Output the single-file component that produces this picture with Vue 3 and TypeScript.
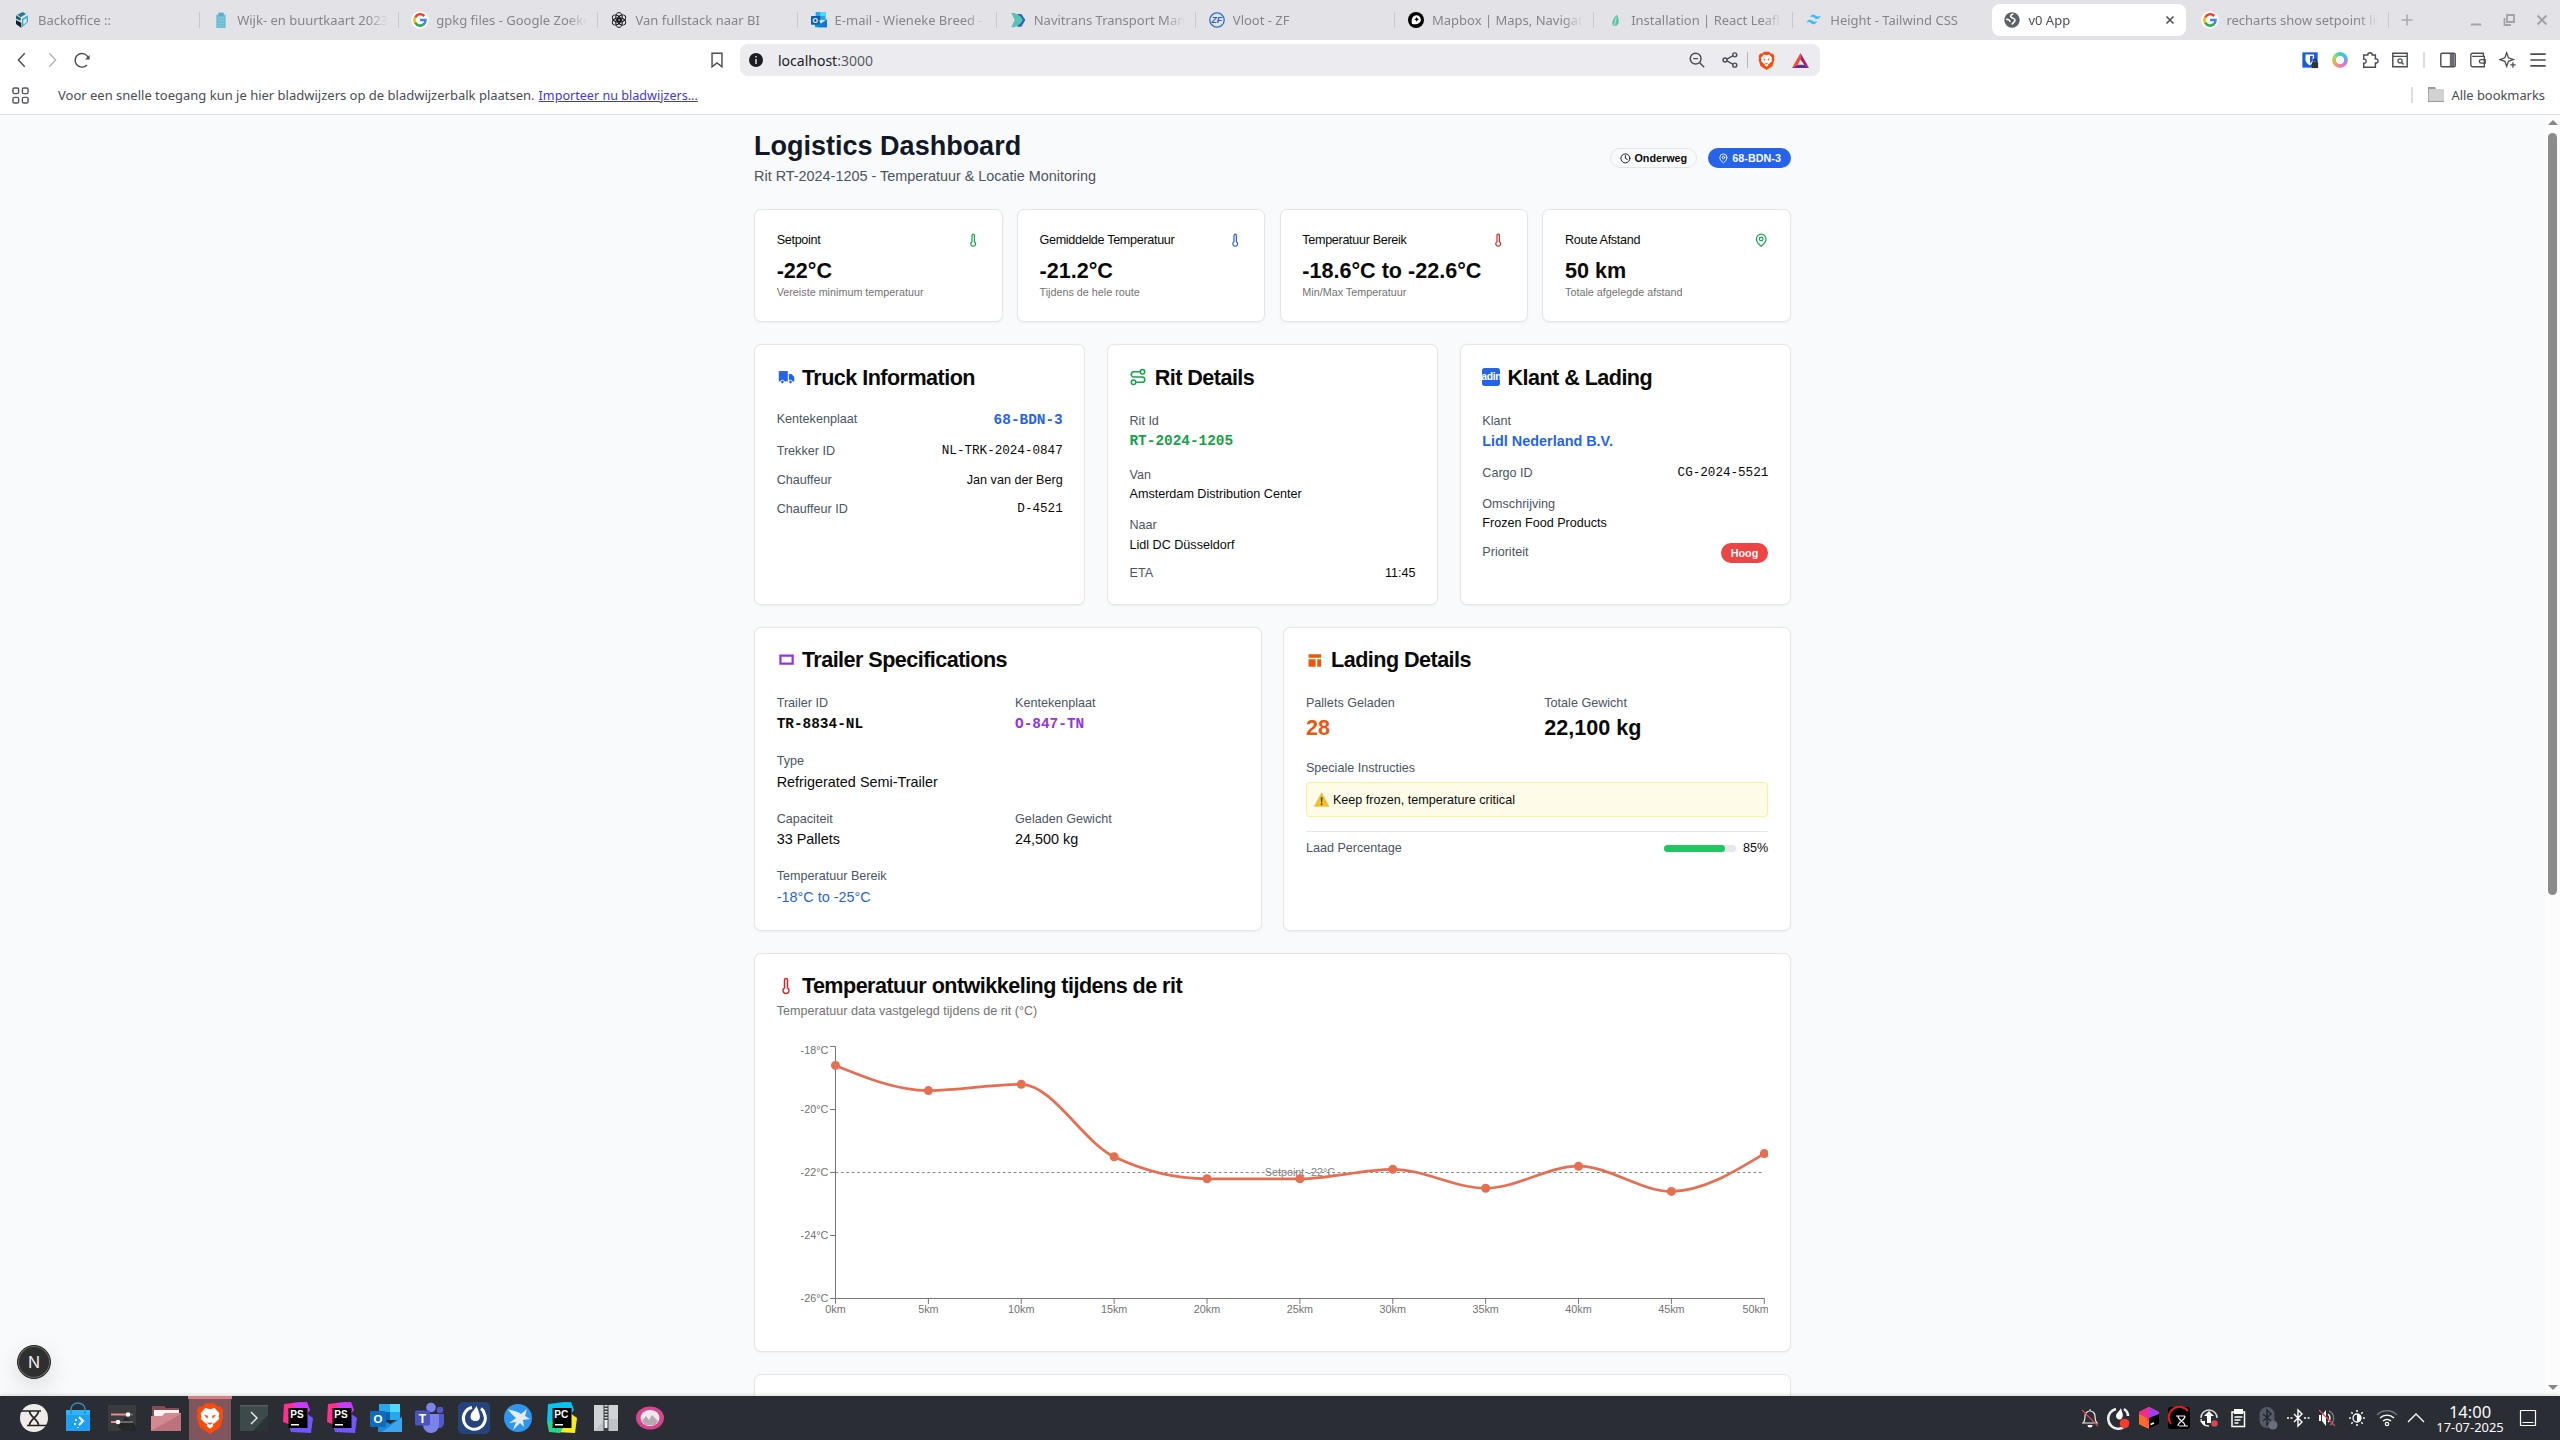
<script setup lang="ts">
interface Tab { title: string; icon: string; active?: boolean }

const tabs: Tab[] = [
  { title: 'Backoffice ::', icon: 'cube' },
  { title: 'Wijk- en buurtkaart 2023', icon: 'clip' },
  { title: 'gpkg files - Google Zoeken', icon: 'google' },
  { title: 'Van fullstack naar BI', icon: 'gpt' },
  { title: 'E-mail - Wieneke Breed - Outlook', icon: 'outlook' },
  { title: 'Navitrans Transport Management', icon: 'navi' },
  { title: 'Vloot - ZF', icon: 'zf' },
  { title: 'Mapbox | Maps, Navigation', icon: 'mapbox' },
  { title: 'Installation | React Leaflet', icon: 'leaf' },
  { title: 'Height - Tailwind CSS', icon: 'tailwind' },
  { title: 'v0 App', icon: 'globe', active: true },
  { title: 'recharts show setpoint line', icon: 'google' },
]

const lion = '<path d="M6 3.500 9 1h6l3 2.500 2-.3 2 3.300-.7 2L22 11l-2.400 8-7.600 5-7.600-5L2 11l.7-2.500L2 6.500l2-3.300z" fill="#fb4b0b"/><path d="M12 5.500l3.500-1 3.500 4-.6 2.500.6 1.500-3.500 3.500-1.500.4.500 1.600-2.500 2-2.500-2 .5-1.600L8.500 16 5 12.500 5.600 11 5 8.500l3.500-4z" fill="#fff"/><path d="M7.500 9.500l3 .8-.5 2.200zM16.500 9.500l-3 .8.5 2.200zM9.500 15.500h5L12 17z" fill="#fb4b0b"/>'
const ps = (label: string, a: string, b: string, c: string) =>
  `<path d="M2 2 20 0l5 3 1 10-12 12L1 20z" fill="${a}"/><path d="M10 1l15-1 3 8-6 8z" fill="${b}"/><path d="M24 11l7 5-2 15-20-1-2-6z" fill="${c}"/><path d="M6.500 6h19v20h-19z" fill="#000"/><text x="8.300" y="15.500" font-family="Liberation Sans, sans-serif" font-weight="700" font-size="10" fill="#fff">${label}</text><path d="M9 22h8v1.500H9z" fill="#fff"/>`

const icons: Record<string, string> = {
  cube: '<path d="M5 4l8-4 5 3-8 5z" fill="#1c7f8e"/><path d="M3 5l7 4v4l-7-3z" fill="#155e70"/><path d="M12 10l9-5v10l-9 8z" fill="#35b3cd"/><path d="M3 12l8 4v8l-8-6z" fill="#0b2733"/><path d="M14 12l5-3v6l-5 4z" fill="#e3e2e7"/>',
  clip: '<path d="M5 4h14v20H5z" fill="#6cbcd6"/><path d="M8 1h8v5H8z" fill="#59aecb"/><path d="M7 9h10M7 13h10M7 17h10M7 21h10" stroke="#8fd0e4"/>',
  google: '<circle cx="12" cy="12" r="13" fill="#fff"/><path d="M18.500 6A8.500 8.500 0 0 0 4.800 8" fill="none" stroke="#ea4335" stroke-width="3.800"/><path d="M4.800 7.800a8.500 8.500 0 0 0 0 8.400" fill="none" stroke="#fbbc05" stroke-width="3.800"/><path d="M4.800 16a8.500 8.500 0 0 0 12.800 2.500" fill="none" stroke="#34a853" stroke-width="3.800"/><path d="M17.300 18.800c2-1.700 3.100-4 3.100-6.800H12" fill="none" stroke="#4285f4" stroke-width="3.800"/>',
  gpt: '<g fill="none" stroke="#111" stroke-width="1.500"><ellipse cx="12" cy="7.500" rx="4.800" ry="6.500"/><ellipse cx="12" cy="7.500" rx="4.800" ry="6.500" transform="rotate(60 12 12)"/><ellipse cx="12" cy="7.500" rx="4.800" ry="6.500" transform="rotate(120 12 12)"/><ellipse cx="12" cy="7.500" rx="4.800" ry="6.500" transform="rotate(180 12 12)"/><ellipse cx="12" cy="7.500" rx="4.800" ry="6.500" transform="rotate(240 12 12)"/><ellipse cx="12" cy="7.500" rx="4.800" ry="6.500" transform="rotate(300 12 12)"/></g>',
  outlook: '<path d="M7 0h15v12H7z" fill="#28a8ea"/><path d="M14 0h8v6h-8z" fill="#50d9ff"/><path d="M7 6h7v6H7z" fill="#0364b8"/><path d="M6 11l9 6 9-6v12H6z" fill="#1490df"/><path d="M24 11L10 23h14z" fill="#0f78d4"/><rect y="6" width="13" height="13" rx="1" fill="#0a5fb0"/><text x="6.500" y="16.200" text-anchor="middle" font-family="Liberation Sans, sans-serif" font-weight="700" font-size="10.500" fill="#fff">O</text>',
  navi: '<path d="M11 3h6l6 9-6 10h-6z" fill="#2f62b5"/><path d="M2 1.500h4c7 2.500 12 6.500 13 10.500-1 4-6 8.500-13 11H2l5-11z" fill="#54c6b8"/>',
  zf: '<circle cx="12" cy="12" r="10.800" fill="none" stroke="#2f6fc5" stroke-width="2"/><text x="11.500" y="16.800" text-anchor="middle" font-family="Liberation Sans, sans-serif" font-style="italic" font-weight="700" font-size="13" fill="#1f62c0">ZF</text>',
  mapbox: '<circle cx="12" cy="12" r="12" fill="#000"/><path d="M6 18c-2-8 2-13 7-13a6.500 6.500 0 0 1 5.500 9.500C16 18 11 19 6 18z" fill="#fff"/><path d="M13 7.500l1.200 2.300 2.300 1.200-2.300 1.200L13 14.500l-1.200-2.300L9.500 11l2.300-1.200z" fill="#000"/>',
  leaf: '<path d="M15 4c4 7 4 16-3 17-6 0-6-9 3-17z" fill="#5cc5a5"/><path d="M14 8l-3 12" stroke="#d7efe8" stroke-width="1.200"/>',
  tailwind: '<path d="M6.500 8c1-4 3.500-4.500 5.500-4 3 .8 4 4.500 10 1.500-1.500 5-5 5.500-7.500 4.500C12 9 11 5.500 6.500 8zM1 16c1.500-4.500 4-5 6.500-4 2.500.8 4 4 9 1.500-1.500 5-4.500 5.500-7 4.500C7 17 6 13.500 1 16z" fill="#38bdf8"/>',
  globe: '<circle cx="12" cy="12" r="11.500" fill="#5f6168"/><path d="M14 3c-4 1-5 3.500-3 5s5.500 1.500 5.500 4-2.500 4.500-5 6.500M3 11c3.500 0 6 1 6 4" fill="none" stroke="#fff" stroke-width="2.300"/>',
  brave: lion,
  kali: '<circle cx="16" cy="16" r="14" fill="#efebe8"/><path d="M3 9h20M9 23.500h20M11.500 9c0 6 9 8 9 14.500M20.500 9c0 6-9 8-9 14.500" fill="none" stroke="#222" stroke-width="1.700"/>',
  bag: '<path d="M4 8h24v21H4z" fill="#1da1f5"/><path d="M4 8h24v5H4z" fill="#2fb4fb"/><path d="M9 12V7a7 6 0 0 1 14 0v5" fill="none" stroke="#2f8fc0" stroke-width="1.500"/><path d="M17 15l4 4-4 4" fill="none" stroke="#fff" stroke-width="2"/><path d="M13 17h2v2h-2zM12 21h2v2h-2zM15 25h2v1h-2z" fill="#d7f0ff"/>',
  settings: '<path d="M2 3h28v26H2z" fill="#393b3d"/><path d="M12 24l8-9 10 9v5H16z" fill="#242628"/><path d="M5 12.500h17" stroke="#e58a94" stroke-width="2"/><path d="M22 12.500h5M12 20h15" stroke="#66686b" stroke-width="2"/><path d="M5 20h7" stroke="#e58a94" stroke-width="2"/><circle cx="22" cy="12.500" r="2.300" fill="#fff"/><circle cx="12" cy="20" r="2.300" fill="#fff"/>',
  folder: '<path d="M2 4h12l2 2h13v8H2z" fill="#844d56"/><path d="M4 8h25v8H4z" fill="#fbf3f3"/><path d="M1 14h11l3-3h16v18H1z" fill="#d38991"/><path d="M1 29L31 12v17z" fill="#bd737c"/>',
  term: '<path d="M2 3h28v26H2z" fill="#3c4a4b"/><path d="M2 3h28v1.500H2z" fill="#526062"/><path d="M30 13L15 29h15z" fill="#2b3435"/><path d="M13 10l6 6-6 6" fill="none" stroke="#eee" stroke-width="1.400"/>',
  ps: ps('PS', '#ff318c', '#c83cff', '#7256ff'),
  pc: ps('PC', '#07c3f2', '#07c3f2', '#f9ec22') + '<path d="M1 20l5.500-1v7H17l-3 5L3 30z" fill="#21d789"/>',
  outlookBig: '<path d="M9 2h21v16H9z" fill="#28a8ea"/><path d="M20 2h10v8H20z" fill="#50d9ff"/><path d="M9 10h11v8H9z" fill="#0364b8"/><path d="M8 15l12 7 12-7v15H8z" fill="#1a88d8"/><path d="M32 15L12 30h20z" fill="#3aa6ee"/><rect y="9" width="16" height="16" rx="1.500" fill="#0f6cbd"/><text x="8" y="21" text-anchor="middle" font-family="Liberation Sans, sans-serif" font-weight="700" font-size="11.500" fill="#fff">O</text>',
  teams: '<circle cx="26" cy="8" r="3.300" fill="#5059c9"/><circle cx="17" cy="5.500" r="4.800" fill="#7b83eb"/><path d="M22 12h8v9a5 5 0 0 1-6 5z" fill="#5059c9"/><path d="M9 12h16v11a8 8 0 0 1-16 0z" fill="#7b83eb"/><rect x="1" y="8.500" width="15" height="15" rx="1.500" fill="#4b53bc"/><text x="8.500" y="20.500" text-anchor="middle" font-family="Liberation Sans, sans-serif" font-weight="700" font-size="12" fill="#fff">T</text>',
  mattermost: '<rect width="32" height="32" rx="5" fill="#25447b"/><path d="M14 5.500A11 11 0 1 0 26 11c-.5-2-1.500-3.500-3-4.500" fill="none" stroke="#fff" stroke-width="3"/><path d="M18.500 4c3 7 4 10 3 13s-9 3-9-2 4-7 6-11z" fill="#fff"/>',
  falcon: '<circle cx="16" cy="16" r="14" fill="#2e96ef"/><path d="M6 7c5 2 8 1.500 13 5l6-5-2 7 5 3-7 1 1 7-4-4-7 7 3-8-7 1 7-5c-3-3-6-5-8-9z" fill="#e6e9ee"/>',
  zip: '<path d="M4 3h24v26H4z" fill="#cfd3d6"/><path d="M4 29L16 17h12v12z" fill="#bfc4c8"/><path d="M13.500 3h5v26h-5z" fill="#3c3f42"/><path d="M16 3v16" stroke="#ddd" stroke-width="3" stroke-dasharray="1.500"/><path d="M14.500 18h3v8h-3z" fill="#f0f0f0"/>',
  pink: '<ellipse cx="16" cy="16" rx="14" ry="11.500" fill="#d6458d"/><ellipse cx="16" cy="16" rx="9.500" ry="8" fill="#f4e7ee"/><path d="M8 19l4-5 3 4 3-5 6 6-3 4H11z" fill="#b7a7b1"/>',
  bellOff: '<path d="M5 17c2-2 2-4 2-7a5 5 0 0 1 10 0c0 3 0 5 2 7z" fill="none" stroke="#eee" stroke-width="1.200"/><path d="M12 3V5" stroke="#eee"/><path d="M9.500 19h5a2.500 2.500 0 0 1-5 0z" fill="#fff"/><path d="M4 4l16 16" stroke="#da4453" stroke-width="1.300"/>',
  mmTray: '<path d="M9 3A10 10 0 1 0 21 15M17 3c3 2 4 4 4 7" fill="none" stroke="#eee" stroke-width="2.600"/><path d="M14 2c1 5 3 7 1 10s-6 1-6-2 4-5 5-8z" fill="#fff"/><circle cx="17.500" cy="17.500" r="4.800" fill="#f93c2b"/>',
  toolbox: '<path d="M12 1l10 5v12l-10 5L2 18V6z" fill="#ff5b3a"/><path d="M12 1l10 5-8 7-12 5V6z" fill="#ef2c8c"/><path d="M12 1l10 5v6l-10-1z" fill="#a33df5"/><path d="M2 8l8 4v10l-8-4z" fill="#ff6a2c"/><path d="M12 12l10-4v10l-10 5z" fill="#000"/><path d="M13.500 18.500l3.500-1.500" stroke="#fff" stroke-width="1.400"/>',
  kdeRed: '<rect x="1" y="1" width="22" height="22" rx="3" fill="#000"/><path d="M4 18A9.500 9.500 0 0 1 21 5" fill="none" stroke="#e02020" stroke-width="2"/><path d="M9 10h9M12 20h9M11 10c0 5 7 5 7 10M18 10c0 5-7 5-7 10" fill="none" stroke="#eee" stroke-width="1.200"/>',
  update: '<path d="M4 12a8 8 0 0 1 16 0M4 13c0 4 4 7.500 8 7" fill="none" stroke="#ddd" stroke-width="1.500"/><path d="M12 5l5 5h-3v7h-4v-7H7z" fill="#fff"/><path d="M3 15h5v5z" fill="#fff"/><circle cx="17.500" cy="17.500" r="3.200" fill="#da4453"/>',
  clipboard: '<path d="M6 6h12.500v14.500H6z" fill="none" stroke="#fff" stroke-width="1.500"/><path d="M8 3h9v5H8z" fill="#fff"/><path d="M8.500 11h8M8.500 14h6M8.500 17h4" stroke="#fff" stroke-width="1.300"/>',
  btOff: '<rect x="3.500" y="1" width="15" height="21" rx="7.500" fill="#555a68"/><path d="M7 8l8 7-4 4V4l4 4-8 7" fill="none" stroke="#24272d" stroke-width="1.500"/><circle cx="17" cy="19" r="4.500" fill="#6a6f7c"/>',
  bt: '<path d="M8 8l8 8-4 4V4l4 4-8 8" fill="none" stroke="#fff" stroke-width="1.400"/><path d="M1 12h2M4.500 12h2M18 12h2M21.500 12h2" stroke="#fff" stroke-width="1.500"/>',
  mute: '<path d="M4 9h2v6H4zM7 9l4-5v16l-4-5z" fill="#fff"/><path d="M13 8a5 5 0 0 1 0 8" fill="none" stroke="#fff" stroke-width="1.400"/><path d="M14 5a8 8 0 0 1 1 14" fill="none" stroke="#777" stroke-width="1.400"/><path d="M4 4l16 16" stroke="#da4453" stroke-width="1.300"/>',
  sun: '<circle cx="12" cy="12" r="4" fill="none" stroke="#fff" stroke-width="1.300"/><path d="M12 8a4 4 0 0 1 0 8z" fill="#fff"/><path d="M12 4v2M12 18v2M4 12h2M18 12h2M6.300 6.300l1.400 1.400M16.300 16.300l1.400 1.400M6.300 17.700l1.400-1.400M16.300 7.700l1.400-1.400" stroke="#eee" stroke-width="1.600"/>',
  wifi: '<path d="M2 9a14 14 0 0 1 20 0" fill="none" stroke="#71757b" stroke-width="1.400"/><path d="M5 12a10 10 0 0 1 14 0M8 15a6 6 0 0 1 8 0" fill="none" stroke="#fff" stroke-width="1.400"/><circle cx="12" cy="18" r="1.700" fill="none" stroke="#fff" stroke-width="1.200"/>',
  up: '<path d="M4 16l8-8 8 8" fill="none" stroke="#fff" stroke-width="1.300"/>',
}

const tasks = ['kali', 'bag', 'settings', 'folder', 'brave', 'term', 'ps', 'ps', 'outlookBig', 'teams', 'mattermost', 'falcon', 'pc', 'zip', 'pink']
const tray = ['bellOff', 'mmTray', 'toolbox', 'kdeRed', 'update', 'clipboard', 'btOff', 'bt', 'mute', 'sun', 'wifi', 'up']

const thermometer = '<path d="M14 4v10.540a4 4 0 1 1-4 0V4a2 2 0 0 1 4 0Z"/>'
const pin = '<path d="M20 10c0 4.993-5.539 10.193-7.399 11.799a1 1 0 0 1-1.202 0C9.539 20.193 4 14.993 4 10a8 8 0 0 1 16 0"/><circle cx="12" cy="10" r="3"/>'

const stats = [
  { label: 'Setpoint', value: '-22°C', note: 'Vereiste minimum temperatuur', icon: thermometer, tone: 'green' },
  { label: 'Gemiddelde Temperatuur', value: '-21.2°C', note: 'Tijdens de hele route', icon: thermometer, tone: 'blue' },
  { label: 'Temperatuur Bereik', value: '-18.6°C to -22.6°C', note: 'Min/Max Temperatuur', icon: thermometer, tone: 'red' },
  { label: 'Route Afstand', value: '50 km', note: 'Totale afgelegde afstand', icon: pin, tone: 'green' },
]

// Chart geometry
const temps = [-18.6, -19.4, -19.2, -21.5, -22.2, -22.2, -21.9, -22.5, -21.8, -22.6, -21.4]
const px = (i: number) => 65 + i * 103.2
const py = (t: number) => 5 + (-18 - t) * 35
const points = temps.map((t, i) => ({ x: px(i), y: py(t), km: `${i * 5}km` }))
const yTicks = [-18, -20, -22, -24, -26]

function monotonePath(p: { x: number; y: number }[]): string {
  const n = p.length
  const h = 103.2
  const s = p.slice(1).map((q, i) => (q.y - p[i].y) / h)
  const m: number[] = new Array(n).fill(0)
  for (let i = 1; i < n - 1; i++) {
    const mid = (s[i - 1] + s[i]) / 2
    m[i] = (Math.sign(s[i - 1]) + Math.sign(s[i])) * Math.min(Math.abs(s[i - 1]), Math.abs(s[i]), 0.5 * Math.abs(mid))
  }
  m[0] = (3 * s[0] - m[1]) / 2
  m[n - 1] = (3 * s[n - 2] - m[n - 2]) / 2
  let d = `M${p[0].x},${p[0].y}`
  for (let i = 0; i < n - 1; i++) {
    d += `C${p[i].x + h / 3},${p[i].y + (m[i] * h) / 3},${p[i + 1].x - h / 3},${p[i + 1].y - (m[i + 1] * h) / 3},${p[i + 1].x},${p[i + 1].y}`
  }
  return d
}
const curve = monotonePath(points)
const loadPercentage = 85
</script>

<template>
  <div class="screen">
    <header class="browser">
      <div class="tabstrip">
        <div v-for="(t, i) in tabs" :key="i" class="tab" :class="{ active: t.active, nosep: i === 9 }">
          <svg class="fav" viewBox="0 0 24 24" v-html="icons[t.icon]"></svg>
          <span class="tab-title">{{ t.title }}</span>
          <svg v-if="t.active" class="tab-x" viewBox="0 0 10 10"><path d="M1.500 1.500l7 7M8.500 1.500l-7 7" stroke="#55565c" stroke-width="1.700" /></svg>
        </div>
        <svg class="plus" viewBox="0 0 12 12"><path d="M6 0.500v11M0.500 6h11" stroke="#a9a9ae" stroke-width="1.500" /></svg>
        <div class="winbtns">
          <svg viewBox="0 0 12 12"><path d="M1 10.500h10" stroke="#a2a2a8" stroke-width="2" /></svg>
          <svg viewBox="0 0 12 12"><path d="M4 1h7v7H4zM1.500 4v7H8" fill="none" stroke="#a2a2a8" stroke-width="1.800" /></svg>
          <svg viewBox="0 0 12 12"><path d="M1.500 1.500l9 9M10.500 1.500l-9 9" stroke="#a2a2a8" stroke-width="2" /></svg>
        </div>
      </div>

      <div class="toolbar">
        <div class="nav">
          <svg viewBox="0 0 20 20"><path d="M13 2.500L6 10l7 7.500" stroke="#4b4c55" /></svg>
          <svg viewBox="0 0 20 20"><path d="M7 2.500l7 7.500-7 7.500" stroke="#b4b5ba" /></svg>
          <svg viewBox="0 0 20 20"><path d="M15.500 15.500A7.600 7.600 0 1 1 17 7.500" stroke="#4b4c55" /><path d="M18.500 4.500v5h-5z" fill="#4b4c55" /></svg>
        </div>
        <svg class="bookmark" viewBox="0 0 20 20"><path d="M4.500 2.500h11v15L10 13.200 4.500 17.500z" stroke="#4b4c55" /></svg>
        <div class="address">
          <svg class="info" viewBox="0 0 14 14"><circle cx="7" cy="7" r="7" fill="#1c1c22" /><path d="M7 6v5M7 3v1.500" stroke="#fff" stroke-width="1.300" /></svg>
          <span class="url">localhost<i>:3000</i></span>
          <div class="addr-tools">
            <svg viewBox="0 0 20 20"><circle cx="8.500" cy="8.500" r="6" stroke="#4b4c55" /><path d="M13 13l5 5M5.800 8.500h5.400" stroke="#4b4c55" /></svg>
            <svg viewBox="0 0 20 20"><path d="M13.500 5.200L6.500 9M6.500 11l7 3.800" stroke="#4b4c55" /><circle cx="4.500" cy="10" r="2.200" stroke="#4b4c55" /><circle cx="15.300" cy="4.300" r="2.200" stroke="#4b4c55" /><circle cx="15.300" cy="15.700" r="2.200" stroke="#4b4c55" /></svg>
            <span class="vsep"></span>
            <svg class="lion" viewBox="0 0 24 24" v-html="icons.brave"></svg>
            <svg class="bat" viewBox="0 0 20 18"><path d="M10 1L1 17l6-3.500 3-5.500z" fill="#ff4724" /><path d="M1 17h18l-5-3.500H7z" fill="#662d91" /><path d="M10 1l9 16-5-3.500L10 8z" fill="#9e1f63" /></svg>
          </div>
        </div>
        <div class="ext">
          <svg viewBox="0 0 20 20"><path d="M1.500 1.500h17v17h-17z" fill="#175ddc" /><path d="M5 4h9.500v6c0 3-4.700 6-4.700 6S5 13 5 10z" fill="#fff" /><path d="M10 5.500h3v5l-3 3z" fill="#175ddc" /><path d="M12 12.500h7V19h-7z" fill="#333" /><path d="M13.500 12.500V11a2 2 0 0 1 4 0v1.500" stroke="#333" stroke-width="1.200" /></svg>
          <div class="ring"></div>
          <svg viewBox="0 0 20 20"><path d="M3 4.500h4.500a2.500 2.500 0 1 1 5 0H16v4.300a2.300 2.300 0 1 1 0 4.400V18H3v-4.500a2.300 2.300 0 1 0 0-4.500z" stroke="#4b4c55" stroke-width="1.600" /></svg>
          <svg viewBox="0 0 20 20"><path d="M2 2.500h16v15H2zM2 6h16" stroke="#4b4c55" stroke-width="1.600" /><circle cx="10" cy="11" r="2.300" stroke="#4b4c55" stroke-width="1.400" /><path d="M11.500 12.500l2.500 2.500" stroke="#4b4c55" /></svg>
          <span class="vsep light"></span>
          <svg viewBox="0 0 20 20"><rect x="2" y="2.500" width="16" height="15" rx="1.500" stroke="#4b4c55" stroke-width="1.600" /><path d="M12 3h5v14h-5z" fill="#6a6b73" /></svg>
          <svg viewBox="0 0 20 20"><path d="M16 6V2.500H4a2 2 0 0 0-2 2v11a2 2 0 0 0 2 2h13V6H3.500M18 9.500h-4.500a2 2 0 0 0 0 4H18z" stroke="#4b4c55" stroke-width="1.500" /></svg>
          <svg viewBox="0 0 20 20"><path d="M8.500 2l2 5.500 5.500 2-5.500 2-2 5.500-2-5.500-5.500-2 5.500-2zM15.500 12.500v6M12.500 15.500h6" stroke="#4b4c55" stroke-width="1.400" /></svg>
          <svg viewBox="0 0 20 20"><path d="M1.500 3.500h17M1.500 10h17M1.500 16.500h17" stroke="#4b4c55" stroke-width="1.800" /></svg>
        </div>
      </div>

      <div class="bookmarks">
        <svg class="apps" viewBox="0 0 18 18"><g fill="none" stroke="#55565f" stroke-width="1.500"><rect x="1" y="1" width="6" height="6" rx="1.500" /><rect x="11" y="1" width="6" height="6" rx="1.500" /><rect x="1" y="11" width="6" height="6" rx="1.500" /><rect x="11" y="11" width="6" height="6" rx="1.500" /></g></svg>
        <span class="bm-text">Voor een snelle toegang kun je hier bladwijzers op de bladwijzerbalk plaatsen.</span>
        <a class="bm-link">Importeer nu bladwijzers...</a>
        <div class="all">
          <span class="vsep light"></span>
          <svg viewBox="0 0 18 16"><path d="M1 0h7l1 2h8v13H1z" fill="#9a9a9a" /><path d="M2 2h15v12H1.500z" fill="#d2d2d2" /></svg>
          <span>Alle bookmarks</span>
        </div>
      </div>
    </header>

    <div class="viewport">
      <main class="page">
        <div class="container">
          <div class="page-head">
            <div>
              <h1>Logistics Dashboard</h1>
              <p>Rit RT-2024-1205 - Temperatuur &amp; Locatie Monitoring</p>
            </div>
            <div class="badges">
              <span class="badge outline"><svg class="lucide" viewBox="0 0 24 24"><circle cx="12" cy="12" r="10" /><path d="M12 6v6l4 2" /></svg>Onderweg</span>
              <span class="badge solid"><svg class="lucide" viewBox="0 0 24 24" v-html="pin"></svg>68-BDN-3</span>
            </div>
          </div>

          <div class="grid four">
            <section v-for="s in stats" :key="s.label" class="card stat">
              <div class="stat-head"><span>{{ s.label }}</span><svg class="lucide" :class="s.tone" viewBox="0 0 24 24" v-html="s.icon"></svg></div>
              <div class="big">{{ s.value }}</div>
              <p class="note">{{ s.note }}</p>
            </section>
          </div>

          <div class="grid three">
            <section class="card">
              <h2><svg class="blue" viewBox="0 0 20 20"><path d="M2 3.400h10v11.500H2z" fill="currentColor" /><path d="M13.200 6.600h3l3 3.300v5h-6z" fill="currentColor" /><circle cx="6" cy="15.500" r="2" fill="currentColor" stroke="#fff" /><circle cx="15" cy="15.500" r="2" fill="currentColor" stroke="#fff" /></svg>Truck Information</h2>
              <div class="stack">
                <div class="row"><span class="lbl">Kentekenplaat</span><span class="mono bold blue">68-BDN-3</span></div>
                <div class="row"><span class="lbl">Trekker ID</span><span class="mono sm">NL-TRK-2024-0847</span></div>
                <div class="row"><span class="lbl">Chauffeur</span><span class="sm">Jan van der Berg</span></div>
                <div class="row"><span class="lbl">Chauffeur ID</span><span class="mono sm">D-4521</span></div>
              </div>
            </section>
            <section class="card">
              <h2><svg class="lucide green" viewBox="0 0 24 24"><circle cx="6" cy="19" r="3" /><path d="M9 19h8.500a3.500 3.500 0 0 0 0-7h-11a3.500 3.500 0 0 1 0-7H15" /><circle cx="18" cy="5" r="3" /></svg>Rit Details</h2>
              <div class="stack">
                <div><span class="lbl">Rit Id</span><p class="mono bold green">RT-2024-1205</p></div>
                <div><span class="lbl">Van</span><p class="sm">Amsterdam Distribution Center</p></div>
                <div><span class="lbl">Naar</span><p class="sm">Lidl DC Düsseldorf</p></div>
                <div class="row"><span class="lbl">ETA</span><span class="sm">11:45</span></div>
              </div>
            </section>
            <section class="card">
              <h2><span class="logo"><b>Lading</b></span>Klant &amp; Lading</h2>
              <div class="stack">
                <div><span class="lbl">Klant</span><p class="bold blue">Lidl Nederland B.V.</p></div>
                <div class="row"><span class="lbl">Cargo ID</span><span class="mono sm">CG-2024-5521</span></div>
                <div><span class="lbl">Omschrijving</span><p class="sm">Frozen Food Products</p></div>
                <div class="row"><span class="lbl">Prioriteit</span><span class="badge danger">Hoog</span></div>
              </div>
            </section>
          </div>

          <div class="grid two">
            <section class="card">
              <h2><svg class="purple" viewBox="0 0 20 20"><path d="M3.800 5h13.600v9H3.800z" fill="none" stroke="currentColor" stroke-width="2.500" /></svg>Trailer Specifications</h2>
              <div class="stack wide">
                <div class="pair">
                  <div><span class="lbl">Trailer ID</span><p class="mono bold">TR-8834-NL</p></div>
                  <div><span class="lbl">Kentekenplaat</span><p class="mono bold purple">O-847-TN</p></div>
                </div>
                <div><span class="lbl">Type</span><p>Refrigerated Semi-Trailer</p></div>
                <div class="pair">
                  <div><span class="lbl">Capaciteit</span><p>33 Pallets</p></div>
                  <div><span class="lbl">Geladen Gewicht</span><p>24,500 kg</p></div>
                </div>
                <div><span class="lbl">Temperatuur Bereik</span><p class="blue">-18°C to -25°C</p></div>
              </div>
            </section>
            <section class="card">
              <h2><svg class="orange" viewBox="0 0 20 20"><path d="M2.800 3.500h14v4h-14zM2.800 9.300h7.900v8.200H2.800zM12.500 9.300h4.300v8.200h-4.300z" fill="currentColor" /></svg>Lading Details</h2>
              <div class="stack wide">
                <div class="pair">
                  <div><span class="lbl">Pallets Geladen</span><p class="big orange">28</p></div>
                  <div><span class="lbl">Totale Gewicht</span><p class="big">22,100 kg</p></div>
                </div>
                <div>
                  <span class="lbl">Speciale Instructies</span>
                  <p class="warning"><svg viewBox="0 0 16 16"><path d="M8 1l7.500 14H.5z" fill="#fcc21b" stroke="#e0a92a" stroke-width=".6" stroke-linejoin="round" /><path d="M7 5.500h2L8.600 11H7.400z" fill="#424a52" /><circle cx="8" cy="12.800" r="1" fill="#424a52" /></svg>Keep frozen, temperature critical</p>
                </div>
                <div class="row load">
                  <span class="lbl">Laad Percentage</span>
                  <div class="meter"><div class="track"><div class="fill" :style="{ width: loadPercentage + '%' }"></div></div><span class="sm">{{ loadPercentage }}%</span></div>
                </div>
              </div>
            </section>
          </div>

          <section class="card">
            <h2 class="with-desc"><svg class="lucide red" viewBox="0 0 24 24" v-html="thermometer"></svg>Temperatuur ontwikkeling tijdens de rit</h2>
            <p class="desc">Temperatuur data vastgelegd tijdens de rit (°C)</p>
            <svg class="chart" viewBox="0 0 1102 320">
              <g stroke="#666" fill="none">
                <path d="M65 5V285M65 285H1097" />
                <path v-for="t in yTicks" :key="t" :d="`M59 ${py(t)}h6`" />
                <path v-for="p in points" :key="p.km" :d="`M${p.x} 285v6`" />
              </g>
              <g class="ticks">
                <text v-for="t in yTicks" :key="t" x="57" :y="py(t) + (t === -18 ? 8.300 : 4.300)" text-anchor="end">{{ t }}°C</text>
                <text v-for="(p, i) in points" :key="p.km" :x="i === 10 ? 1102 : p.x" y="301.500" :text-anchor="i === 10 ? 'end' : 'middle'">{{ p.km }}</text>
              </g>
              <path :d="`M65 ${py(-22)}H1097`" stroke="#777" stroke-dasharray="3 3" />
              <text class="setpoint" x="581" :y="py(-22) + 4.300" text-anchor="middle">Setpoint -22°C</text>
              <path :d="curve" fill="none" stroke="#e76e50" stroke-width="3" />
              <circle v-for="p in points" :key="p.km" :cx="p.x" :cy="p.y" r="5" fill="#e76e50" />
            </svg>
          </section>

          <section class="card next"></section>
        </div>
      </main>
      <div class="scrollbar"><i class="arrow-up"></i><i class="thumb"></i><i class="arrow-down"></i></div>
      <div class="devtools"><span>N</span></div>
    </div>

    <footer class="taskbar">
      <div v-for="(k, i) in tasks" :key="i" class="task" :class="{ current: k === 'brave' }">
        <svg :viewBox="k === 'brave' ? '0 0 24 24' : '0 0 32 32'" v-html="icons[k]"></svg>
      </div>
      <div class="tray">
        <svg v-for="k in tray" :key="k" viewBox="0 0 24 24" v-html="icons[k]"></svg>
        <div class="clock"><b>14:00</b><span>17-07-2025</span></div>
        <svg class="desktop" viewBox="0 0 18 18"><path d="M1.500 1.500h15v15h-15zM3.500 13.500h11" fill="none" stroke="#fff" stroke-width="1.200" /></svg>
      </div>
    </footer>
  </div>
</template>

<style>
html, body { margin: 0; background: #f9fafb; overflow: hidden; }
</style>

<style scoped>
* { box-sizing: border-box; }
h1, h2, p { margin: 0; }
svg { display: block; flex: none; }
.screen { width: 2560px; height: 1440px; display: flex; flex-direction: column; overflow: hidden; }
.browser { height: 115px; flex: none; background: #fff; border-bottom: 1px solid #dfe0e4; font: 13px "Noto Sans", sans-serif; color: #4b4c55; }
.tabstrip { height: 40px; background: #e3e2e7; display: flex; align-items: center; padding-left: 1px; color: #85858b; }
.tab { width: 199.150px; height: 28px; display: flex; align-items: center; padding: 0 11px 0 13px; position: relative; flex: none; }
.tab::after { content: ""; position: absolute; right: 0; top: 6px; width: 1px; height: 16px; background: #c9c9ce; }
.tab.active::after, .tab.nosep::after { display: none; }
.tab.active { background: #fff; height: 32px; border-radius: 8px; color: #4f5057; width: 194px; margin-right: 3px; padding-left: 12px; }
.fav { width: 16px; height: 16px; margin-right: 8px; overflow: visible; }
.tab-title { flex: 1; white-space: nowrap; overflow: hidden; -webkit-mask-image: linear-gradient(90deg, #000 calc(100% - 20px), transparent); mask-image: linear-gradient(90deg, #000 calc(100% - 20px), transparent); }
.tab-x { width: 10px; height: 10px; }
.plus { width: 12px; height: 12px; margin-left: 12px; }
.winbtns { margin-left: auto; display: flex; gap: 21px; padding-right: 12px; }
.winbtns svg { width: 12px; height: 12px; }
.toolbar { height: 40px; display: flex; align-items: center; }
.toolbar svg { width: 18px; height: 18px; fill: none; stroke-width: 1.600; }
.nav { display: flex; gap: 12px; padding-left: 13px; width: 708px; }
.toolbar .bookmark { margin-right: 14px; }
.address { width: 1080px; height: 32px; border-radius: 8px; background: #ecebf0; display: flex; align-items: center; padding: 0 10px 0 9px; }
.address .info { width: 14px; height: 14px; }
.url { margin-left: 15px; font-size: 14px; color: #202124; }
.url i { font-style: normal; color: #5a5b63; }
.addr-tools { margin-left: auto; display: flex; align-items: center; }
.addr-tools svg { margin-right: 15px; }
.addr-tools svg:nth-child(2) { margin-right: 8px; }
.vsep { width: 1px; height: 16px; background: #b5b5bb; }
.vsep.light { background: #dcdce1; width: 2px; }
.addr-tools .lion { width: 19px; height: 19px; margin: 0 15px 0 9px; }
.addr-tools .bat { width: 19px; height: 17px; margin: 0; }
.ext { margin-left: auto; display: flex; align-items: center; gap: 12px; padding-right: 13px; }
.ext .vsep { margin: 0 2px; }
.ring { width: 18px; height: 18px; border-radius: 50%; background: radial-gradient(circle, #fff 0 4.500px, transparent 5px), conic-gradient(#35d0c8, #47b8f5, #c27bf5, #f57bb1, #f5a742, #8ee65a, #35d0c8); transform: scale(.88); }
.bookmarks { height: 34px; display: flex; align-items: center; padding: 0 15px 4px 12px; font-size: 12.900px; }
.apps { width: 17px; height: 17px; margin-right: 29px; }
.bm-text { font-size: 13px; }
.bm-link { color: #4338e0; text-decoration: underline; margin-left: 4px; font-size: 12.600px; }
.all { margin-left: auto; display: flex; align-items: center; }
.all svg { width: 18px; height: 16px; margin: 0 6px 0 14px; }

.viewport { flex: 1; min-height: 0; position: relative; display: flex; overflow: hidden; background: #f9fafb; }
.page { flex: 1; zoom: .9; padding: 16.200px 16px 0; font: 16px/24px "Liberation Sans", Arial, sans-serif; color: #0a0a0a; }
.container { width: 1152px; margin: 0 auto; display: flex; flex-direction: column; gap: 24px; }
.page-head { display: flex; align-items: center; justify-content: space-between; }
h1 { font-size: 30px; line-height: 36px; font-weight: 700; color: #111827; }
.page-head p { margin-top: 4px; color: #4b5563; }
.badges { display: flex; gap: 12px; }
.badge { display: inline-flex; align-items: center; height: 22px; border: 1px solid transparent; border-radius: 11px; padding: 0 10px; font-size: 12px; line-height: 16px; font-weight: 700; }
.badge svg { width: 12px; height: 12px; margin-right: 4px; }
.badge.outline { border-color: #e5e5e5; }
.badge.solid { background: #2563eb; color: #fafafa; }
.badge.danger { background: #ef4444; color: #fafafa; }
.lucide { fill: none; stroke: currentColor; stroke-width: 2; stroke-linecap: round; stroke-linejoin: round; }
.blue { color: #2563eb; } .green { color: #16a34a; } .red { color: #dc2626; } .purple { color: #9333ea; } .orange { color: #ea580c; }
.grid { display: grid; gap: 24px; }
.four { grid-template-columns: repeat(4, 1fr); gap: 16px; }
.three { grid-template-columns: repeat(3, 1fr); }
.two { grid-template-columns: repeat(2, 1fr); }
.card { background: #fff; border: 1px solid #e5e5e5; border-radius: 8px; padding: 24px; box-shadow: 0 1px 2px rgba(0, 0, 0, .05); }
.stat-head { display: flex; justify-content: space-between; align-items: center; height: 20px; margin-bottom: 8px; font-size: 14px; letter-spacing: -.025em; }
.stat-head svg { width: 16px; height: 16px; }
.big { font-size: 24px; line-height: 32px; font-weight: 700; }
.note { font-size: 12px; line-height: 16px; color: #737373; }
h2 { display: flex; align-items: center; gap: 8px; height: 24px; font-size: 24px; line-height: 24px; font-weight: 700; letter-spacing: -.025em; margin-bottom: 24px; }
h2 svg, .logo { width: 20px; height: 20px; flex: none; }
.logo { background: #2563eb; border-radius: 3px; overflow: hidden; display: flex; align-items: center; justify-content: center; color: #fff; font-size: 11.500px; line-height: 20px; letter-spacing: -.025em; }
.stack { display: flex; flex-direction: column; gap: 12px; }
.stack.wide { gap: 16px; }
.row { display: flex; justify-content: space-between; }
.lbl, .sm { font-size: 14px; line-height: 20px; }
.lbl { color: #4b5563; }
.mono { font-family: "Liberation Mono", monospace; }
.bold { font-weight: 700; }
.pair { display: grid; grid-template-columns: 1fr 1fr; gap: 16px; }
.warning { margin-top: 4px; padding: 8px; border: 1px solid #fef08a; border-radius: 4px; background: #fefce8; font-size: 14px; line-height: 20px; display: flex; align-items: center; }
.warning svg { width: 17px; height: 17px; margin-right: 4px; }
.load { border-top: 1px solid #e5e7eb; padding-top: 8px; }
.meter { display: flex; align-items: center; gap: 8px; }
.track { width: 80px; height: 8px; border-radius: 4px; background: #e5e7eb; }
.fill { height: 8px; border-radius: 4px; background: #22c55e; }
h2.with-desc { margin-bottom: 6px; }
.desc { font-size: 14px; line-height: 20px; color: #737373; margin-bottom: 24px; }
.chart { width: 1102px; height: 320px; font-size: 12px; }
.ticks { fill: #737373; }
.setpoint { fill: #808080; }
.next { height: 200px; }
.scrollbar { width: 15px; background: #fcfcfc; display: flex; flex-direction: column; align-items: center; padding: 5px 0 6px; }
.arrow-up { border: 5px solid transparent; border-top: 0; border-bottom: 5px solid #868686; }
.arrow-down { margin-top: auto; border: 5px solid transparent; border-bottom: 0; border-top: 5px solid #868686; }
.thumb { width: 9px; height: 762px; border-radius: 5px; background: #8b8b8b; margin-top: 8px; }
.devtools { position: absolute; left: 17px; top: 1230px; width: 34px; height: 34px; border-radius: 50%; background: #2f2f2f; border: 1px solid #2b2b2b; box-shadow: inset 0 0 0 1px #6a6a6a, 0 8px 22px rgba(0, 0, 0, .12); color: #eee; font: 16px/32px Inter, sans-serif; text-align: center; }
.taskbar { height: 44px; flex: none; background: #2a2d33; display: flex; padding-left: 12px; box-shadow: 0 0 5px rgba(0, 0, 0, .2); position: relative; }
.task { width: 44px; display: flex; align-items: center; justify-content: center; }
.task svg { width: 32px; height: 32px; }
.task.current { background: #80555d; background-clip: content-box; padding: 0 1px; border-top: 3px solid #d67d84; }
.task.current svg { margin-top: -3px; }
.tray { margin-left: auto; display: flex; align-items: center; padding-right: 23px; }
.tray svg { width: 24px; height: 24px; margin-right: 5.700px; }
.clock { width: 74px; display: flex; flex-direction: column; align-items: center; color: #fcfcfc; font-family: "Noto Sans", sans-serif; margin: 0 12px 0 -1px; }
.clock b { font-weight: 400; font-size: 16.500px; line-height: 17px; }
.clock span { font-size: 12.900px; line-height: 14px; }
.tray .desktop { width: 18px; height: 18px; margin: 0; }
</style>
